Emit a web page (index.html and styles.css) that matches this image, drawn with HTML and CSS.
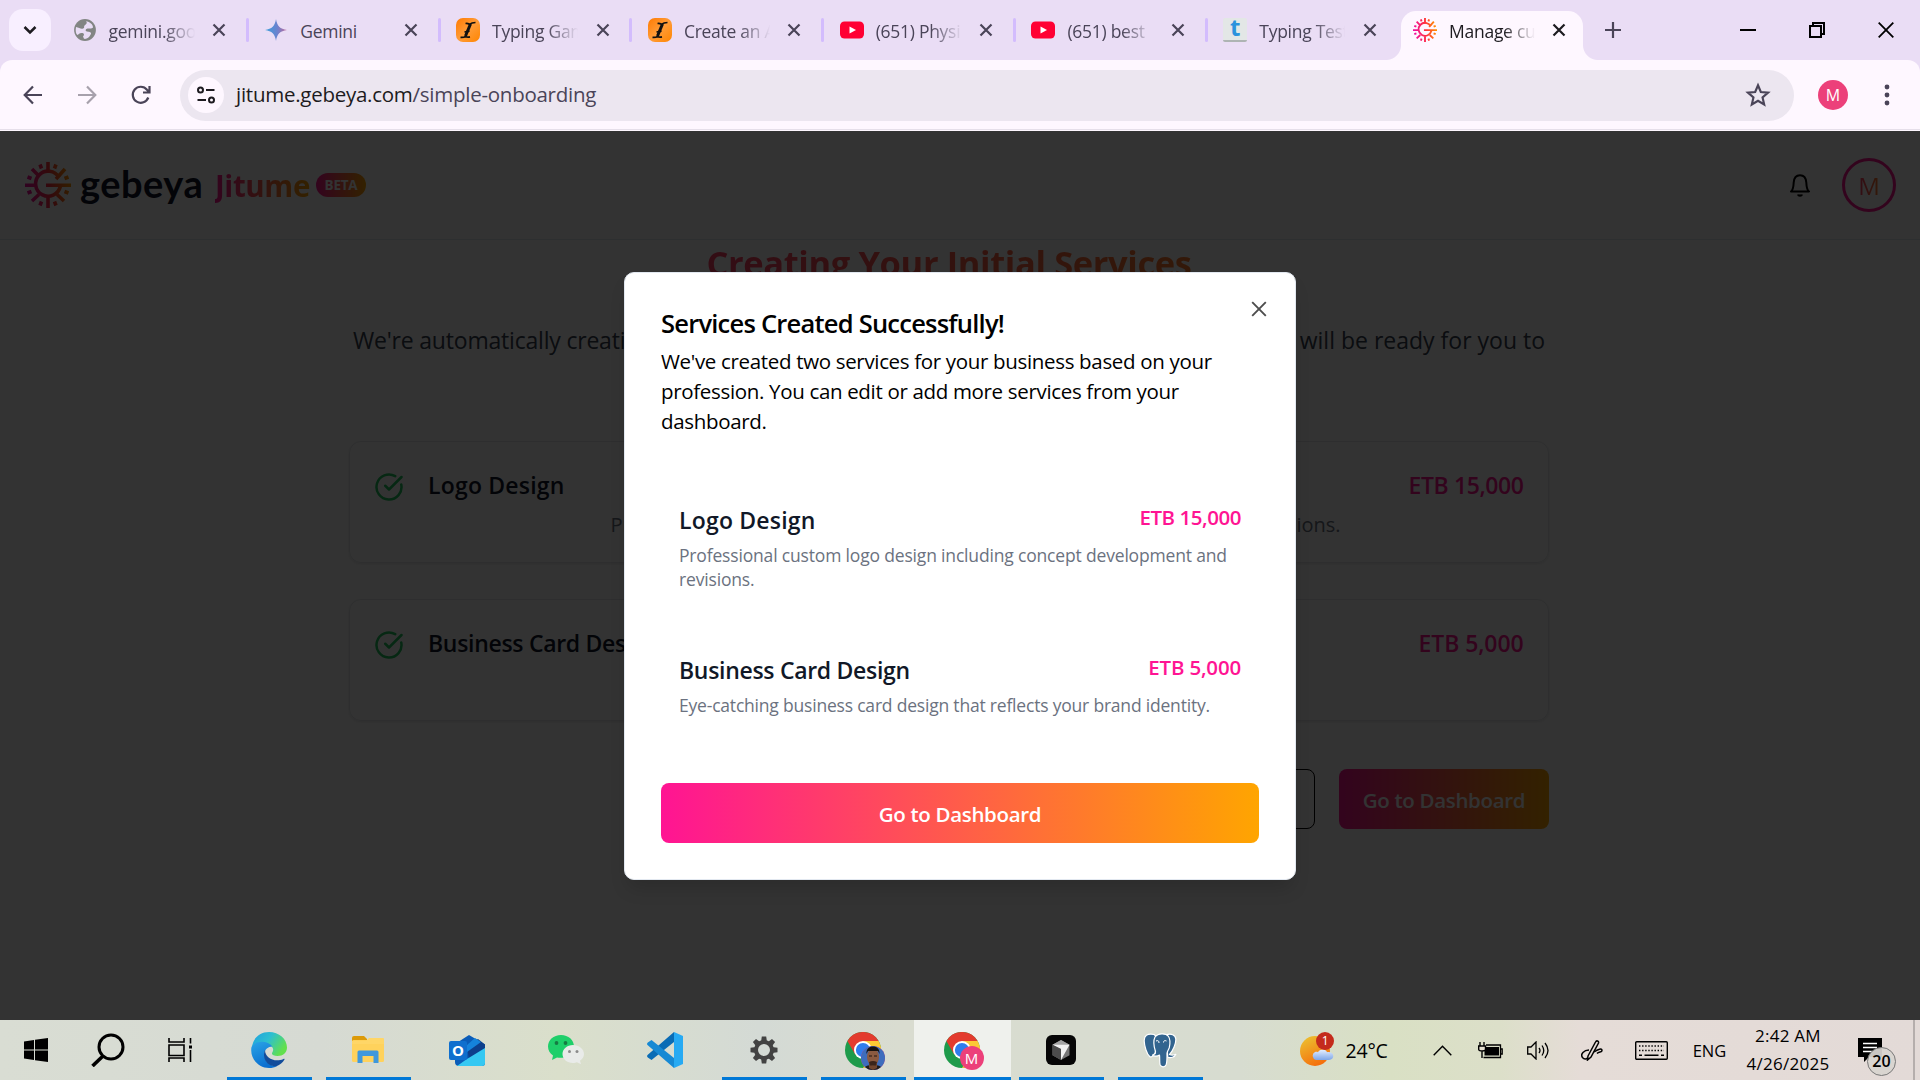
FILE: index.html
```html
<!DOCTYPE html>
<html lang="en">
<head>
<meta charset="utf-8">
<title>Manage customers</title>
<link rel="stylesheet" href="styles.css">
</head>
<body>
<svg class="defs" aria-hidden="true">
  <defs>
    <linearGradient id="brandAbs" gradientUnits="userSpaceOnUse" x1="2" y1="18" x2="44" y2="12"><stop offset="0" stop-color="#f0109c"/><stop offset=".5" stop-color="#ff3040"/><stop offset="1" stop-color="#ff9500"/></linearGradient>
    <linearGradient id="gem" x1="0" x2="1"><stop offset="0" stop-color="#3aa0dc"/><stop offset=".55" stop-color="#6b83cf"/><stop offset="1" stop-color="#c06a9a"/></linearGradient>
    <linearGradient id="orange" x1="0" x2="1" y2="1"><stop offset="0" stop-color="#ff7a00"/><stop offset=".5" stop-color="#ff9c38"/><stop offset="1" stop-color="#ff8500"/></linearGradient>
    <linearGradient id="edgeTop" x1="0" x2="1" y2=".5"><stop offset="0" stop-color="#1f9fe0"/><stop offset=".5" stop-color="#2dbfd0"/><stop offset="1" stop-color="#62e04c"/></linearGradient>
    <linearGradient id="edgeLeft" x1="0" x2=".4" y2="1"><stop offset="0" stop-color="#2aa4e6"/><stop offset="1" stop-color="#0a6fd0"/></linearGradient>
    <linearGradient id="sun" x1=".2" x2=".7" y2="1"><stop offset="0" stop-color="#ecc030"/><stop offset="1" stop-color="#f56a0a"/></linearGradient>
    <linearGradient id="cloud" x1="0" x2="0" y2="1"><stop offset="0" stop-color="#e6f0ff"/><stop offset="1" stop-color="#7ea6e8"/></linearGradient>
    <symbol id="x" viewBox="0 0 14 14"><path d="M1.500 1.500l11 11M12.500 1.500l-11 11" fill="none" stroke="currentColor" stroke-width="2.200"/></symbol>
    <symbol id="typing" viewBox="0 0 24 24"><rect width="24" height="24" rx="7" fill="url(#orange)"/><path d="M9.500 5.500c2-.2 3 .2 4 .8 1.500-1.200 3.500-1.800 6-1.800" fill="none" stroke="#111" stroke-width="1.700"/><path d="M14.500 6L9.500 18" stroke="#111" stroke-width="3"/><path d="M4.500 19.300c2.500.2 4-.2 5-1 1 .8 2.500 1 4.500 .6M8.500 14l5-.8" fill="none" stroke="#111" stroke-width="1.700"/></symbol>
    <symbol id="youtube" viewBox="0 0 24 24"><rect y="3.500" width="24" height="17" rx="4.500" fill="#ff0033"/><path d="M9.500 8.500v7l6.500-3.500z" fill="#fff"/></symbol>
    <symbol id="sunG" viewBox="0 0 46 46">
      <g fill="none" stroke="url(#brandAbs)" stroke-width="3.600">
        <path d="M34 15.500A12.500 12.500 0 1 0 35.300 24.500"/>
        <path d="M21 23.200H46M23 11V0M23 35v11M11 23.200H0M14 14L7 7M14 32.500L7 39M32 32.500L39 39M31 17l9-10"/>
        <path d="M16.500 6.500L15 2.500M29.500 6.500l1.500-4M6.500 16.500L2.500 15M6.500 29.500L2.500 31M39.500 16.500l4-1.500M39.500 29.500l4 1.500M16.500 39.500l-1.500 4M29.500 39.500l1.500 4"/>
      </g>
    </symbol>
    <symbol id="check" viewBox="0 0 24 24"><path d="M21.800 10A10 10 0 1 1 17 3.340M9 11l3 3L22 4" fill="none" stroke="#22c55e" stroke-width="2" stroke-linecap="round" stroke-linejoin="round"/></symbol>
    <symbol id="chrome" viewBox="0 0 36 36">
      <circle cx="18" cy="18" r="18" fill="#1e9b4b"/>
      <path d="M18 9H33.600A18 18 0 0 1 18 36L25.800 22.500z" fill="#fcc934"/>
      <path d="M2.400 9A18 18 0 0 1 33.600 9H18v9l-7.800 4.500z" fill="#e33b2e"/>
      <circle cx="18" cy="18" r="9" fill="#fff"/><circle cx="18" cy="18" r="7.100" fill="#2f7ded"/>
    </symbol>
  </defs>
</svg>

<header class="tabstrip">
  <div class="tab-search"><svg width="14" height="10" viewBox="0 0 14 10"><path d="M1.500 2l5.500 5.500L12.500 2" fill="none" stroke="#1d1b20" stroke-width="2.500"/></svg></div>
  <nav class="tabs">
    <div class="tab"><svg class="fav" viewBox="0 0 24 24"><circle cx="12" cy="12" r="10.900" fill="#828583"/><path d="M13 3.200c2 2-.5 3.300-1.500 4.300-1 1.500.5 2.500-1.500 3-2 .8-4-1-7-1.500-.8 4 0 7 1.500 8 1-.5 2-2 4-2 3 0 3 2 1.500 3.500l1 2.300c3 .5 5-1.300 6.500-4 1.500-2-.5-3-2-3-2.500 0-3.500-1-2.500-2.500 1.500-2 5 .5 7-1.800C20 6 17 4 13 3.200z" fill="#e9ddf5"/></svg><span class="label">gemini.goo</span><svg class="close"><use href="#x"/></svg></div>
    <div class="tab"><svg class="fav" viewBox="0 0 24 24"><path d="M12 1c.8 6.500 4.200 10.200 11 11-6.800.8-10.200 4.500-11 11-.8-6.500-4.200-10.200-11-11C7.800 11.200 11.200 7.500 12 1z" fill="url(#gem)"/></svg><span class="label nofade">Gemini</span><svg class="close"><use href="#x"/></svg></div>
    <div class="tab"><svg class="fav"><use href="#typing"/></svg><span class="label">Typing Gam</span><svg class="close"><use href="#x"/></svg></div>
    <div class="tab"><svg class="fav"><use href="#typing"/></svg><span class="label">Create an A</span><svg class="close"><use href="#x"/></svg></div>
    <div class="tab"><svg class="fav"><use href="#youtube"/></svg><span class="label">(651) Physi</span><svg class="close"><use href="#x"/></svg></div>
    <div class="tab"><svg class="fav"><use href="#youtube"/></svg><span class="label">(651) best</span><svg class="close"><use href="#x"/></svg></div>
    <div class="tab last"><span class="fav keycap">t</span><span class="label">Typing Test</span><svg class="close"><use href="#x"/></svg></div>
    <div class="tab active"><svg class="fav"><use href="#sunG"/></svg><span class="label">Manage cu</span><svg class="close"><use href="#x"/></svg></div>
  </nav>
  <svg class="new-tab" viewBox="0 0 16 16"><path d="M8 0v16M0 8h16" stroke="#4a4458" stroke-width="2.200"/></svg>
  <div class="window-controls">
    <svg viewBox="0 0 16 16"><path d="M0 8h16" stroke="#000" stroke-width="2"/></svg>
    <svg viewBox="0 0 16 16"><path d="M1 4h11v11H1zM4 4V1h11v11h-3" fill="none" stroke="#000" stroke-width="2"/></svg>
    <svg viewBox="0 0 16 16"><path d="M.7 .7l14.600 14.600M15.300 .7L.7 15.300" stroke="#000" stroke-width="1.800"/></svg>
  </div>
</header>

<div class="toolbar-wrap"><div class="toolbar">
  <div class="nav-icons">
    <svg viewBox="0 0 20 20"><path d="M19 10H2M10 1.500L1.700 10l8.300 8.500" fill="none" stroke="#4a4458" stroke-width="2.200"/></svg>
    <svg viewBox="0 0 20 20"><path d="M1 10h17M10 1.500l8.300 8.500-8.300 8.500" fill="none" stroke="#a7a1ac" stroke-width="2.200"/></svg>
    <svg viewBox="0 0 20 20"><path d="M17.300 12.500A8 8 0 1 1 16 4.700l2 2.300M18.500 1v6.500H12" fill="none" stroke="#4a4458" stroke-width="2.200"/></svg>
  </div>
  <div class="omnibox">
    <div class="site-info"><svg width="20" height="18" viewBox="0 0 20 18"><g fill="none" stroke="#1d1b20" stroke-width="2"><circle cx="4.500" cy="4" r="2.500"/><circle cx="15.500" cy="14" r="2.500"/><path d="M10 4h8.500M1.500 14H10"/></g></svg></div>
    <div class="url">jitume.gebeya.com<span>/simple-onboarding</span></div>
    <svg class="star" viewBox="0 0 24 24"><path d="M12 3l2.600 6.200 6.700.6-5.100 4.400 1.500 6.500L12 17.300l-5.700 3.400 1.500-6.500L2.700 9.800l6.700-.6z" fill="none" stroke="#4a4458" stroke-width="2"/></svg>
  </div>
  <div class="profile">M</div>
  <svg class="dots" viewBox="0 0 6 22"><g fill="#4a4458"><circle cx="3" cy="3" r="2.400"/><circle cx="3" cy="11" r="2.400"/><circle cx="3" cy="19" r="2.400"/></g></svg>
</div></div>

<div class="page">
  <header class="site-header">
    <svg class="brand-mark"><use href="#sunG"/></svg>
    <span class="wordmark">gebeya</span>
    <span class="product grad-text">Jitume</span>
    <span class="beta">BETA</span>
    <svg class="bell" viewBox="0 0 20 23"><path d="M1 17.500c2-1.500 2.500-4.500 2.700-9C4 4 6.500 1.200 10 1.200S16 4 16.300 8.500c.2 4.500.7 7.500 2.700 9z" fill="none" stroke="#000" stroke-width="2" stroke-linejoin="round"/><path d="M8 20.500c.5 1.500 3.500 1.500 4 0" fill="none" stroke="#000" stroke-width="2.200"/></svg>
    <div class="user"><span class="grad-text">M</span></div>
  </header>
  <main class="content">
    <h1 class="grad-text">Creating Your Initial Services</h1>
    <p class="lead"><span>We're automatically creating two services</span><span>based on your profession. These will be ready for you to</span></p>
    <section class="cards">
      <article class="card"><svg class="check"><use href="#check"/></svg><div class="card-body"><div class="card-row"><h2>Logo Design</h2><b>ETB 15,000</b></div><p>Professional custom logo design including concept development and revisions.</p></div></article>
      <article class="card"><svg class="check"><use href="#check"/></svg><div class="card-body"><div class="card-row"><h2 class="compact">Business Card Design</h2><b class="short">ETB 5,000</b></div><p>Eye-catching business card design that reflects your brand identity.</p></div></article>
    </section>
    <div class="actions"><button class="outline" aria-label="Edit services"></button><button class="primary">Go to Dashboard</button></div>
  </main>
  <div class="overlay">
    <section class="modal" role="dialog">
      <svg class="modal-close" viewBox="0 0 16 16"><path d="M1.200 1.200l13.600 13.600M14.800 1.200L1.200 14.800" stroke="#4d4d4d" stroke-width="1.900"/></svg>
      <h2>Services Created Successfully!</h2>
      <p class="modal-desc">We've created two services for your business based on your profession. You can edit or add more services from your dashboard.</p>
      <div class="services">
        <article class="service"><div class="service-row"><h3>Logo Design</h3><b>ETB 15,000</b></div><p>Professional custom logo design including concept development and revisions.</p></article>
        <article class="service"><div class="service-row"><h3 class="compact">Business Card Design</h3><b class="short">ETB 5,000</b></div><p>Eye-catching business card design that reflects your brand identity.</p></article>
      </div>
      <button class="primary wide">Go to Dashboard</button>
    </section>
  </div>
</div>

<footer class="taskbar">
  <div class="sys"><svg width="24" height="24" viewBox="0 0 24 24"><path d="M0 3.500l10-1.500v9.500H0zM11 1.800L24 0v11.500H11zM0 12.500h10V22L0 20.500zM11 12.500h13V24l-13-1.800z"/></svg></div>
  <div class="sys"><svg width="34" height="34" viewBox="0 0 34 34"><circle cx="20" cy="14" r="12" fill="none" stroke="#000" stroke-width="3"/><path d="M12.500 22.500L1.500 33" stroke="#000" stroke-width="3.600"/></svg></div>
  <div class="sys"><svg width="25" height="24" viewBox="0 0 25 24"><path d="M1 0v4h15V0M1 24v-4h15v4M1 7h15v10.500H1zM22.500 0v5.500M22.500 12v12" fill="none" stroke="#000" stroke-width="1.600"/><path d="M21 7.500h3v3h-3z"/></svg></div>
  <div class="apps">
    <div class="app on"><svg width="36" height="36" viewBox="0 0 36 36"><path d="M1 15C2 6 9 0 18 0c10 0 18 7 18 15.500 0 5-4 8.500-9.500 8.500-4 0-6.500-1.500-5.200-3.500 1-1.500 1.200-3 .4-4.600C20 11 7 7 1 15z" fill="url(#edgeTop)"/><path d="M21.500 14.500C17 8 4 8 .5 15-1.500 26 7 36 18 36c3 0 6-.6 8-1.800C18 34 13 28 13.500 21.500c.2-4 3.500-7 8-7z" fill="url(#edgeLeft)"/><path d="M14 18c-3.500 8 2.500 17 11.500 16.200 3.500-1.200 6.200-3.700 8-6.700.3-.7-.4-1-1-.6C24 31 14 26 14 18z" fill="#124d9b"/></svg></div>
    <div class="app on"><svg width="34" height="28" viewBox="0 0 34 28"><path d="M1 2a2 2 0 0 1 2-2h10l3 3v5H1z" fill="#dc9a08"/><rect x="1" y="4" width="32" height="22" rx="1.500" fill="#ffd25c"/><path d="M1 5h14l3-3h14a1 1 0 0 1 1 1v5H1z" fill="#ffd667"/><path d="M6.500 26.500V16A1.500 1.500 0 0 1 8 14.500h18a1.500 1.500 0 0 1 1.500 1.500v11h-5v-7h-11v7h-5z" fill="#3f98dc"/></svg></div>
    <div class="app"><svg width="36" height="31" viewBox="0 0 36 31"><path d="M6 9L20 0l16 9.500V28a3 3 0 0 1-3 3H10a4 4 0 0 1-4-4z" fill="#0a5cb8"/><path d="M18 10l11-6 7 5.500v6L20 26z" fill="#0d3f8c"/><path d="M18 10l8-7 6 4-14 10z" fill="#1583dc"/><path d="M8 31h25a3 3 0 0 0 3-3V13L18 24z" fill="#35c8f2"/><rect y="6" width="18" height="19" rx="2" fill="#0f6fce"/></svg><span class="outlook-o">O</span></div>
    <div class="app"><svg width="36" height="30" viewBox="0 0 36 30"><path d="M13 0C5.500 0 0 5 0 11.500c0 4 2 7 5 9L4 25l5-2.500c7 1.500 17-2 17-11C26 5 20.500 0 13 0z" fill="#1fcf6a"/><circle cx="8.500" cy="8" r="1.900" fill="#157c43"/><circle cx="17.500" cy="8" r="1.900" fill="#157c43"/><path d="M25 10c-6 0-10.500 4-10.500 9S19 28 25 28c1.500 0 3-.3 4-.7l4 2-1-3.600c2.500-1.600 4-4 4-6.700 0-5-5-9-11-9z" fill="#e9ebe9"/><circle cx="21.500" cy="16.500" r="1.500" fill="#8b8b8b"/><circle cx="29" cy="16.500" r="1.500" fill="#8b8b8b"/></svg></div>
    <div class="app"><svg width="36" height="36" viewBox="0 0 36 36"><path d="M27 0v10L4.500 28 .8 25.500c-1-.8-1-2 0-2.800z" fill="#0a6cb5"/><path d="M27 36V26L4.500 8 .8 10.500c-1 .8-1 2 0 2.800z" fill="#1689d4"/><path d="M27 0l9 4v28l-9 4z" fill="#27aaf3"/></svg></div>
    <div class="app on"><svg width="28" height="28" viewBox="-14 -14 28 28"><circle r="8" fill="none" stroke="#434343" stroke-width="4"/><g fill="#434343"><path id="tooth" d="M-2.200-13.500h4.400L3-8h-6z"/><use href="#tooth" transform="rotate(45)"/><use href="#tooth" transform="rotate(90)"/><use href="#tooth" transform="rotate(135)"/><use href="#tooth" transform="rotate(180)"/><use href="#tooth" transform="rotate(225)"/><use href="#tooth" transform="rotate(270)"/><use href="#tooth" transform="rotate(315)"/></g></svg></div>
    <div class="app on"><svg width="36" height="36"><use href="#chrome"/></svg><span class="app-badge photo"><svg width="24" height="24" viewBox="0 0 24 24"><rect width="24" height="24" fill="#3e6dbd"/><path d="M2 24c1-4 5-5 10-5s9 1 10 5z" fill="#211c1a"/><path d="M8 15h8v7l-4 2-4-2z" fill="#70452f"/><ellipse cx="12" cy="11" rx="6" ry="8.500" fill="#8a5a40"/><path d="M5.500 8C5 3 8 .5 12 .5S19 3 18.500 8L17 5H7z" fill="#17120f"/><path d="M8 16q4-2 8 0l-1 3.500H9z" fill="#3a241b"/><path d="M8 10h3M13 10h3" stroke="#22140e" stroke-width="1.200"/></svg></span></div>
    <div class="app on current"><svg width="36" height="36"><use href="#chrome"/></svg><span class="app-badge">M</span></div>
    <div class="app on"><svg width="30" height="30" viewBox="0 0 30 30"><rect width="30" height="30" rx="6" fill="#060606"/><path d="M15 5l8.500 4.800v10.400L15 25l-8.500-4.800V9.800z" fill="#777"/><path d="M15 5l8.500 4.800L15 12 6.500 9.800z" fill="#a4a4a4"/><path d="M6.500 9.800H23.500L15 25V14z" fill="#f2f2f2"/><path d="M6.500 9.800L15 14v11l-8.500-4.800z" fill="#4c4c4c"/></svg></div>
    <div class="app on"><svg width="34" height="35" viewBox="0 0 34 35"><g fill="#32648f" stroke="#fff" stroke-width="1.200" stroke-linejoin="round"><path d="M11 1.500C4 0 1 3 1.200 8c.2 5 2.500 13 5.500 15.500 2 1.500 4-1 5.500-3L14 4z"/><path d="M23 2c5-2 9.500 0 9.800 4 .3 5-3 12-6.300 15.500 2 .8 4 .8 6.300-.2-1 3-5 4-8 3z"/><path d="M12 4c3-4 11-4 13.500-.5 2 3 1.500 8 .8 11-.7 2.500-2.300 4-2.300 6 0 4 .2 8-.8 11-1.200 3-4.700 3-6 .5-1-3-.2-7-.7-10-2 1.500-5.500 1.300-7 .2 2-1.200 3.500-1.200 3-3.700C11 14 10 8 12 4z"/></g><path d="M13 8c2-1 3 0 3 2M23.500 8c-2-1-3 0-3 1.500" stroke="#fff" fill="none"/></svg></div>
  </div>
  <div class="tray">
    <div class="weather"><span class="weather-icon"><svg width="34" height="34" viewBox="0 0 34 34"><circle cx="15" cy="18" r="15" fill="url(#sun)"/><path d="M16 27a4.300 4.300 0 0 1-1-8c2-.7 3 .2 3 .2 1.500-3.500 8-3.500 9 0 8-1 8 7.500 2 7.800z" fill="url(#cloud)"/></svg><i>1</i></span><span>24°C</span></div>
    <div><svg width="19" height="11" viewBox="0 0 19 11"><path d="M.7 10.300l8.800-9 8.800 9" fill="none" stroke="#000" stroke-width="1.400"/></svg></div>
    <div><svg width="25" height="17" viewBox="0 0 25 17"><path d="M8 3h14.500v12.500H5.500M22.500 7h1.700v5h-1.700" fill="none" stroke="#000" stroke-width="1.300"/><path d="M6.500 5H21v8.500H6.500z"/><path d="M2 0v4M6 0v4M.7 4h6.800v3.500c0 2-6.800 2-6.800 0zM4 9v7" fill="#e4dfd0" stroke="#000" stroke-width="1.400"/></svg></div>
    <div><svg width="23" height="19" viewBox="0 0 23 19"><g fill="none" stroke="#000" stroke-width="1.300"><path d="M.7 6H4l5-5v17l-5-5H.7z"/><path d="M12 7q2 2.500 0 5M15 4.500q3.500 5 0 10M18 2q6 7.500 0 15"/></g></svg></div>
    <div><svg width="22" height="21" viewBox="0 0 22 21"><g fill="none" stroke="#000" stroke-width="1.500"><path d="M7 16L14.500 2c1-2 3.500-1 3 1L10 17l-3.500 3z"/><path d="M8 10c-5 0-9 4-6.500 7.500 1.500 2 4 2 5 .5M13 12c4-3 8-4 8-1.500 0 2-3 1-5 3"/></g></svg></div>
    <div><svg width="33" height="19" viewBox="0 0 33 19"><rect x=".7" y=".7" width="31.600" height="17.600" rx="1" fill="none" stroke="#000" stroke-width="1.400"/><path d="M4 5h25M4 9.500h25" stroke="#000" stroke-width="1.400" stroke-dasharray="1.400 1.700"/><path d="M4 14.300h3M9.500 14.300h14M26 14.300h3" stroke="#000" stroke-width="1.400"/></svg></div>
    <div class="lang">ENG</div>
    <div class="clock"><span>2:42 AM</span><span>4/26/2025</span></div>
    <div class="notif"><span class="notif-icon"><svg width="24" height="24" viewBox="0 0 24 24"><path d="M0 0h24v19H11l-5 5v-5H0z"/><path d="M5 5.500h14M5 9.500h14M5 13.500h9" stroke="#fff" stroke-width="1.400"/></svg><i>20</i></span></div>
    <div class="show-desktop"></div>
  </div>
</footer>
</body>
</html>
```
FILE: styles.css
```css
* { box-sizing: border-box; }
body {
  margin: 0; width: 1920px; height: 1080px; overflow: hidden;
  display: flex; flex-direction: column;
  font-family: "Open Sans", "Noto Sans", sans-serif; background: #eaddf5;
}
h1, h2, h3, p { margin: 0; }
svg { display: block; flex: none; }
button { font: inherit; margin: 0; padding: 0; }
.defs { position: absolute; width: 0; height: 0; }

/* Tab strip */
.tabstrip { height: 60px; flex: none; display: flex; align-items: center; background: #eaddf5; padding-left: 9px; }
.tab-search { width: 42px; height: 42px; border-radius: 14px; background: #f8efff; display: flex; align-items: center; justify-content: center; }
.tabs { display: flex; height: 60px; margin-left: 5px; }
.tab { width: 191.8px; padding-left: 16.500px; display: flex; align-items: center; color: #4a4458; position: relative; }
.tab::after { content: ""; position: absolute; right: -1px; top: 18px; width: 3px; height: 24px; border-radius: 2px; background: #d3bcfd; }
.tab.last::after { display: none; }
.fav { width: 24px; height: 24px; }
.label { width: 88px; margin-left: 12px; font-size: 17.500px; letter-spacing: -.28px; line-height: 24px; padding-top: 2px; white-space: nowrap; overflow: hidden; -webkit-mask-image: linear-gradient(90deg, #000 62%, transparent 98%); mask-image: linear-gradient(90deg, #000 62%, transparent 98%); }
.label.nofade { -webkit-mask-image: none; mask-image: none; }
.close { width: 14px; height: 14px; margin-left: 15.500px; }
.keycap { background: #e3e7e6; border-bottom: 2px solid #aeb4b3; border-radius: 2px; color: #2b93dd; font: bold 24px/17px "Open Sans", sans-serif; text-align: center; }
.tab.active { width: 182px; height: 49px; margin-top: 11px; margin-left: 2.500px; padding: 0 0 11px 12px; background: #fef7ff; border-radius: 15px 15px 0 0; color: #1d1b20; }
.tab.active .close { margin-left: 14.500px; }
.tab.active::before, .tab.active::after { content: ""; position: absolute; top: auto; bottom: 0; width: 15px; height: 15px; border-radius: 0; }
.tab.active::before { left: -15px; background: radial-gradient(circle at 0 0, transparent 14.500px, #fef7ff 15.500px); }
.tab.active::after { right: -15px; background: radial-gradient(circle at 100% 0, transparent 14.500px, #fef7ff 15.500px); }
.new-tab { width: 16px; height: 16px; margin-left: 22px; }
.window-controls { margin-left: auto; display: flex; gap: 53px; margin-right: 26.500px; }
.window-controls svg { width: 16px; height: 16px; }

/* Toolbar */
.toolbar-wrap { height: 71px; flex: none; background: #eaddf5; }
.toolbar { height: 71px; display: flex; align-items: center; background: linear-gradient(#e6dfea, #e6dfea) 0 69px / 100% 1px no-repeat #fef7ff; border-radius: 12px 12px 0 0; padding: 0 0 2px 23px; }
.nav-icons { display: flex; gap: 34px; width: 157px; }
.nav-icons svg { width: 20px; height: 20px; }
.omnibox { width: 1614px; height: 51px; border-radius: 26px; background: #ece6f0; display: flex; align-items: center; padding: 0 24px 0 8px; margin-top: 1px; }
.site-info { width: 36px; height: 36px; border-radius: 50%; background: #fef7ff; display: flex; align-items: center; justify-content: center; }
.url { margin-left: 12px; font-size: 20.500px; letter-spacing: -.26px; line-height: 30px; color: #1d1b20; padding-bottom: 3px; }
.url span { color: #4a4458; }
.star { width: 26px; height: 26px; margin-left: auto; margin-right: -1px; }
.profile { width: 30px; height: 30px; margin-left: 24px; border-radius: 50%; background: #ec407a; color: #fff; font-size: 16px; line-height: 30px; text-align: center; }
.dots { width: 6px; height: 22px; margin-left: 36px; }

/* Page */
.page { height: 889px; flex: none; position: relative; background: #fff; overflow: hidden; }
.grad-text { background: linear-gradient(90deg, #ff1493, #ffa500); -webkit-background-clip: text; background-clip: text; color: transparent; }
.site-header { height: 109px; border-bottom: 1px solid #e2e8f0; display: flex; align-items: center; padding: 0 24px 0 25px; }
.brand-mark { width: 46px; height: 46px; }
.wordmark { font: 700 38px/46px Lato, "Open Sans", sans-serif; color: #12142b; width: 122px; margin: -4px 0 0 9px; letter-spacing: .5px; }
.product { font-size: 29.500px; line-height: 40px; font-weight: 700; margin: 2px 0 0 13px; letter-spacing: -.4px; width: 95px; }
.beta { margin-left: 6px; width: 50px; height: 24px; border-radius: 12px; background: linear-gradient(90deg, #ff1493, #ffa500); color: #fff; font-size: 13.500px; line-height: 24px; font-weight: 700; letter-spacing: -.2px; text-align: center; }
.bell { width: 20px; height: 23px; margin-left: auto; }
.user { width: 54px; height: 54px; margin-left: 32px; border: 3px solid #ff1493; border-radius: 50%; text-align: center; font-size: 24px; line-height: 50px; }
.user span { display: block; }
.content { width: 1200px; margin: 0 auto 0 349px; padding-top: 3px; }
.content h1 { font-size: 34.500px; letter-spacing: -.38px; line-height: 40px; font-weight: 700; text-align: center; white-space: nowrap; }
.lead { display: flex; justify-content: space-between; margin: 39px 4px 83px; font-size: 23px; line-height: 36px; color: #374151; white-space: nowrap; }
.lead span:first-child { letter-spacing: -.2px; }
.cards { display: flex; flex-direction: column; gap: 36px; }
.card { height: 122px; border: 1px solid #e5e7eb; border-radius: 12px; box-shadow: 0 1px 3px rgba(0, 0, 0, .1); padding: 27px 25px 0 24px; display: flex; }
.check { width: 30px; height: 30px; margin-top: 3px; }
.card-body { flex: 1; padding-left: 24px; }
.card-row, .service-row { display: flex; justify-content: space-between; }
.card-row { font-size: 23px; line-height: 32px; font-weight: 600; }
.card-row h2 { font-size: inherit; font-weight: 600; letter-spacing: .2px; color: #0f172a; }
.card-row b { font-weight: 600; color: #ff1493; letter-spacing: -.4px; margin-right: -.500px; }
.card-row .short { letter-spacing: -.1px; }
.card-row .compact, .service-row .compact { letter-spacing: -.3px; }
.card-body p { margin-top: 10px; font-size: 20px; line-height: 28px; letter-spacing: -.03px; color: #6b7280; text-align: center; }
.actions { margin-top: 48px; display: flex; justify-content: flex-end; gap: 24px; }
.actions button { height: 60px; border-radius: 8px; }
.outline { width: 190px; background: transparent; border: 1.500px solid #000; }
.primary { border: 0; border-radius: 8px; width: 210px; color: #fff; background: linear-gradient(90deg, #ff1493, #ffa500); font-size: 20.500px; line-height: 58px; font-weight: 600; letter-spacing: -.33px; padding-top: 2px; }

/* Dialog */
.overlay { position: absolute; inset: 0; background: rgba(0, 0, 0, .8); display: grid; place-items: center; padding-top: 1px; }
.modal { position: relative; width: 672px; height: 608px; border: 1px solid #e2e8f0; border-radius: 10px; background: #fff; padding: 35px 36px 0; box-shadow: 0 12px 18px -4px rgba(0, 0, 0, .15); color: #000; }
.modal-close { position: absolute; right: 28px; top: 28px; width: 16px; height: 16px; }
.modal h2 { font-size: 25.500px; line-height: 30px; font-weight: 600; letter-spacing: -.77px; white-space: nowrap; }
.modal-desc { margin-top: 8px; font-size: 20.500px; line-height: 30px; letter-spacing: -.33px; }
.services { margin-top: 48px; display: flex; flex-direction: column; gap: 24.500px; }
.service { padding: 18px; }
.service-row h3 { margin-top: 3px; font-size: 23px; line-height: 30px; font-weight: 600; color: #111827; letter-spacing: .2px; }
.service-row b { font-size: 20.500px; line-height: 30px; font-weight: 600; color: #ff1493; letter-spacing: -.45px; }
.service-row .short { letter-spacing: -.18px; }
.service p { margin-top: 8px; font-size: 17.500px; line-height: 24px; color: #6b7280; letter-spacing: -.17px; }
.service:last-child p { letter-spacing: -.2px; }
.wide { display: block; width: 598px; height: 60px; margin-top: 48.500px; line-height: 58px; }

/* Taskbar */
.taskbar { height: 60px; flex: none; display: flex; background: linear-gradient(90deg, #d9ddd3 0, #d6dad3 320px, #dadfcb 560px, #d4dad5 760px, #d9dcd0 900px, #d7dcd0 1240px, #d9e0c4 1390px, #dcdfc9 1500px, #e5dcd7 1580px, #e3dad7 100%); color: #000; }
.sys { width: 72px; display: flex; align-items: center; justify-content: center; }
.apps { display: flex; margin-left: 3.500px; }
.app { width: 99px; position: relative; display: flex; align-items: center; justify-content: center; }
.app.on::after { content: ""; position: absolute; left: 7px; right: 7px; bottom: 0; height: 3px; background: #0078d7; }
.app.current { background: #eff1ed; width: 97px; margin: 0 1px; }
.app.current::after { left: 0; right: 0; }
.outlook-o { position: absolute; left: 31.500px; top: 20px; width: 18px; text-align: center; color: #fff; font-size: 15px; line-height: 20px; font-weight: 700; }
.app-badge { position: absolute; left: 47px; top: 27px; width: 24px; height: 24px; border-radius: 50%; overflow: hidden; background: #ec407a; color: #fff; font-size: 15px; line-height: 24px; text-align: center; }
.app-badge.photo { top: 26px; }
.current .app-badge { left: 46px; top: 26px; }
.tray { margin-left: auto; display: grid; grid-template-columns: 128px 48px 48px 48px 60px 58px 59px 98px 76px 7px; }
.tray > div { display: flex; align-items: center; justify-content: center; }
.tray > .weather { justify-content: flex-start; padding-left: 10px; gap: 11.500px; font-size: 19.500px; letter-spacing: -.2px; }
.weather span:last-child { padding-top: 1px; }
.weather-icon { position: relative; }
.weather-icon i { position: absolute; right: 0; top: -1px; width: 18px; height: 18px; border-radius: 50%; background: #c42b1c; color: #fff; font: 12px/18px "Open Sans", sans-serif; text-align: center; }
.lang { font-size: 16.500px; }
.tray > .clock { flex-direction: column; font-size: 17px; line-height: 28px; letter-spacing: .25px; }
.notif-icon { position: relative; margin-left: -10px; }
.notif-icon i { position: absolute; left: 9px; top: 9px; width: 29px; height: 29px; border: 1.500px solid #777; border-radius: 50%; background: rgba(216, 212, 208, .93); font: 600 16px/26px "Open Sans", sans-serif; text-align: center; }
.show-desktop { border-left: 2px solid #b5aeac; }
```
